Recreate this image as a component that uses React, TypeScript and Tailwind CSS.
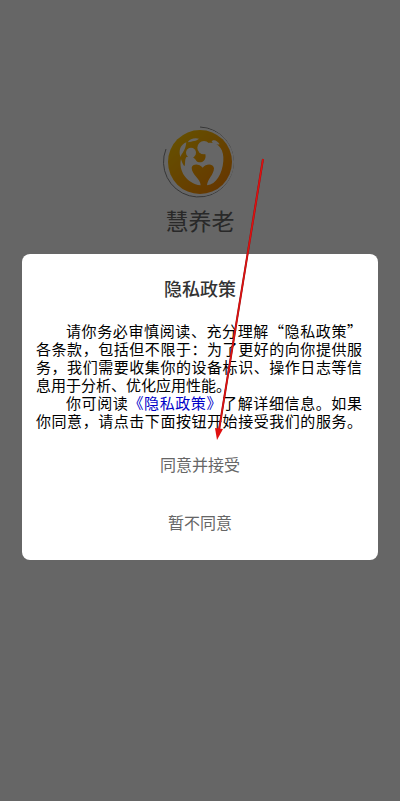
import { useState } from "react";

const Logo = () => {
  return (
    <svg width="76" height="76" viewBox="0 0 76 76" fill="none" aria-hidden="true">
      <defs>
        <linearGradient id="sun" x1="12" y1="12" x2="62" y2="66" gradientUnits="userSpaceOnUse">
          <stop stopColor="#ffc800" />
          <stop offset="1" stopColor="#ff8800" />
        </linearGradient>
      </defs>
      <path d="M38 3A35 35 0 1 1 4 25" stroke="#888" strokeWidth="1" />
      <circle cx="38" cy="38" r="34" fill="#fff" />
      <circle cx="38" cy="38" r="32" fill="url(#sun)" />
      <g transform="scale(.3333) translate(-35 -27)" fill="#fff">
        {/* leaves */}
        <path d="M108 82C90 90 84 106 90 126C94 116 106 106 108 82Z" />
        <path d="M112 82C118 71 134 67 146 71C138 79 126 78 112 82Z" />
        <path d="M184 80C188 71 202 76 208 88C198 90 190 88 184 80Z" />
        {/* child */}
        <circle cx="122" cy="113" r="15" />
        <path d="M108 126C102 136 106 148 102 154C98 148 94 140 92 132C84 166 108 206 151 211C151 190 124 180 124 158C126 146 146 144 157 158C150 142 140 142 136 134L128 126Z" />
        {/* parent */}
        <circle cx="161" cy="98" r="20" />
        <path d="M174 84C204 80 222 104 219 138C216 176 198 208 170 211C172 192 190 180 191 160C190 146 168 144 157 158C154 152 146 148 142 142L152 142C162 140 168 130 165 118Z" />
      </g>
    </svg>
  )
}

export default function App() {

  const [open, setOpen] = useState<boolean>(true);

  return (
    <main lang="zh-CN" className="min-h-screen bg-white font-['Noto_Sans_CJK_SC',sans-serif]">
      <section className="flex flex-col items-center pt-[124px]">
        <Logo />
        <h1 className="mt-1 text-[23px] leading-8 text-[#666]">慧养老</h1>
      </section>

      {open && (
        <div className="fixed inset-0 bg-black/60 px-[22px] pt-[254px]">
          <div role="dialog" aria-labelledby="policy-title" className="rounded-lg bg-white px-[14px] pt-[22px] pb-4">
            <h2 id="policy-title" className="text-center text-lg leading-6 font-medium text-[#333]">隐私政策</h2>
            <div className="mt-[22px] pr-[2px] text-justify text-[15px] leading-[18px] text-black">
              <p className="indent-[2em]">
                请你务必审慎阅读、充分理解“隐私政策”各条款，包括但不限于：为了更好的向你提供服务，我们需要收集你的设备标识、操作日志等信息用于分析、优化应用性能。
              </p>
              <p className="indent-[2em] [text-align-last:justify]">
                你可阅读<a href="#policy" className="text-[#0000c8]">《隐私政策》</a>了解详细信息。如果你同意，请点击下面按钮开始接受我们的服务。
              </p>
            </div>
            <div className="mt-3 flex flex-col items-center gap-[14px] text-base text-[#666]">
              <button className="h-11 px-6" onClick={() => setOpen(false)}>同意并接受</button>
              <button className="h-11 px-6">暂不同意</button>
            </div>
          </div>
        </div>
      )}

      <svg className="pointer-events-none absolute top-[158px] left-1/2 ml-3" width="54" height="284" viewBox="-4 0 54 284" aria-hidden="true">
        <path d="M47 1L3 272" stroke="#8a1515" strokeWidth="2" />
        <path d="M47 1L3 272" stroke="#e01010" strokeWidth="1.5" />
        <path d="M-1 270L7 271L1 282Z" fill="#e01010" />
      </svg>
    </main>
  )
}
